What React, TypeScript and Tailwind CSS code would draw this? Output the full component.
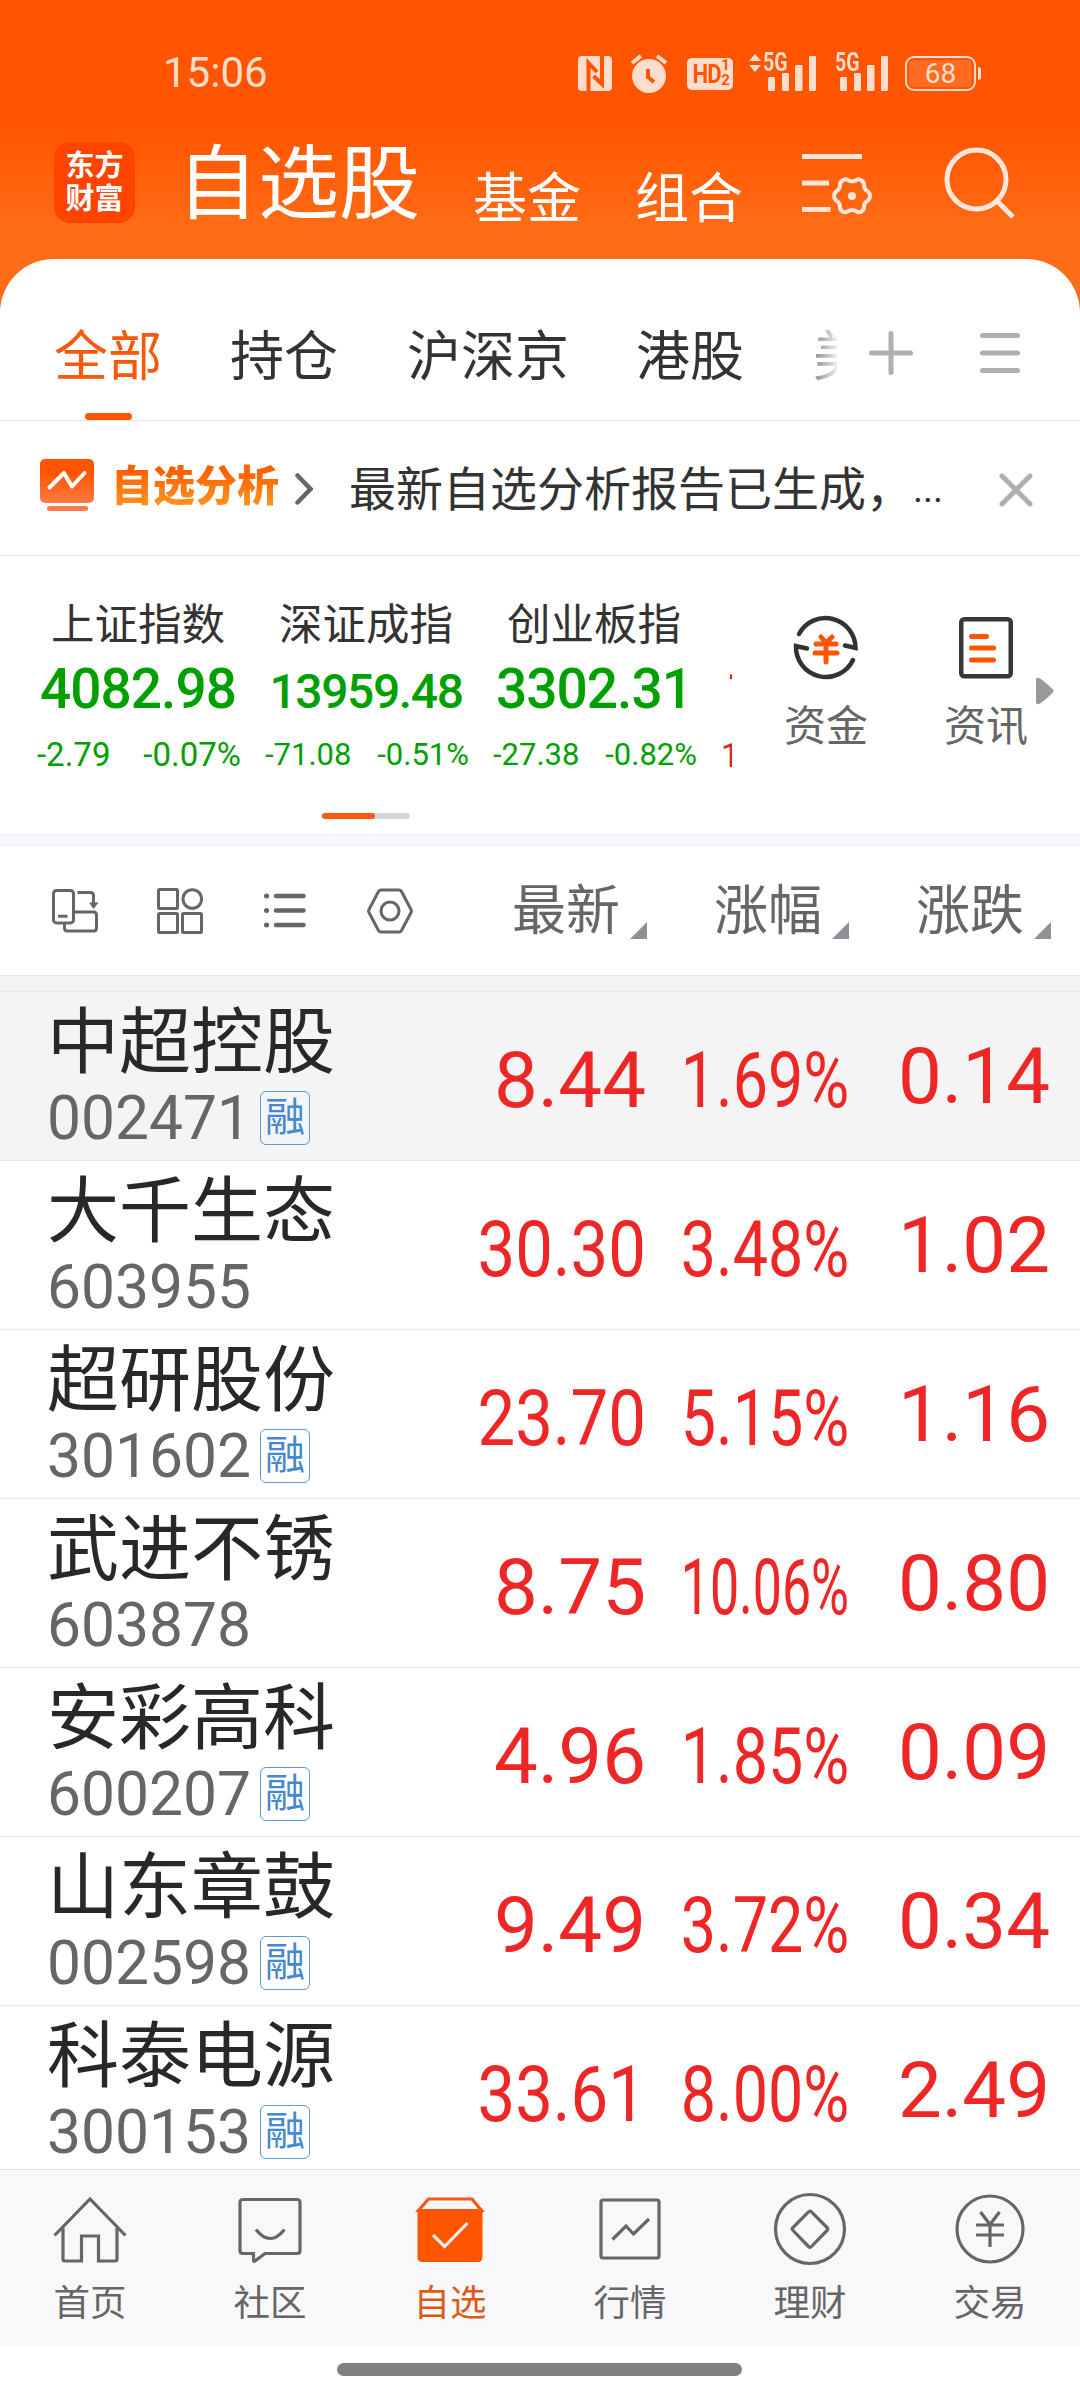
import type { ReactNode } from "react";
import clsx from "clsx";

const indices = [
  { name: "上证指数", value: "4082.98", change: "-2.79", percent: "-0.07%", valueClass: "text-[55px] leading-[72px] tracking-[-1px]", changeClass: "text-[33px]", percentClass: "text-[33px]" },
  { name: "深证成指", value: "13959.48", change: "-71.08", percent: "-0.51%", valueClass: "text-[48px] leading-[77px] tracking-[-1.4px]", changeClass: "text-[31px]", percentClass: "text-[31px]" },
  { name: "创业板指", value: "3302.31", change: "-27.38", percent: "-0.82%", valueClass: "text-[55px] leading-[72px] tracking-[-1px]", changeClass: "text-[31px]", percentClass: "text-[31px]" },
];

const stocks = [
  { name: "中超控股", code: "002471", margin: true, price: "8.44", percent: "1.69%", change: "0.14" },
  { name: "大千生态", code: "603955", margin: false, price: "30.30", percent: "3.48%", change: "1.02" },
  { name: "超研股份", code: "301602", margin: true, price: "23.70", percent: "5.15%", change: "1.16" },
  { name: "武进不锈", code: "603878", margin: false, price: "8.75", percent: "10.06%", change: "0.80" },
  { name: "安彩高科", code: "600207", margin: true, price: "4.96", percent: "1.85%", change: "0.09" },
  { name: "山东章鼓", code: "002598", margin: true, price: "9.49", percent: "3.72%", change: "0.34" },
  { name: "科泰电源", code: "300153", margin: true, price: "33.61", percent: "8.00%", change: "2.49" },
];

function Signal() {
  return (
    <svg width="49" height="36" viewBox="0 0 49 36" fill="currentColor">
      <rect x="0" y="22" width="7" height="14" rx="1" />
      <rect x="14" y="18" width="7" height="18" rx="1" />
      <rect x="27" y="10" width="7.5" height="26" rx="1" />
      <rect x="41" y="1" width="7" height="35" rx="1" />
    </svg>
  );
}

function StatusBar() {
  return (
    <div className="flex h-[146px] items-center pl-[163px] text-[#ffdccb]">
      <div className="w-[415px] text-[42px] leading-[48px]">15:06</div>
      <svg width="34" height="35" viewBox="0 0 34 35">
        <rect width="34" height="35" rx="4" fill="currentColor" />
        <path d="M10.500 35V7L19 16M24 0V28L15.500 20" fill="none" stroke="#ff5500" strokeWidth="4" />
      </svg>
      <svg className="ml-[18px]" width="38" height="39" viewBox="0 0 38 39" fill="none">
        <circle cx="19" cy="22" r="17" fill="currentColor" />
        <path d="M2 9l9-7M36 9l-9-7" stroke="currentColor" strokeWidth="4" />
        <path d="M18 15v8l6 5" stroke="#ff5500" strokeWidth="4" />
      </svg>
      <div className="ml-[19px] mt-0.5 flex h-8 w-[46px] justify-center rounded-[5px] bg-[#ffdccb] font-bold text-[#ff5500]">
        <span className="scale-x-[0.85] text-[26px] leading-[33px] tracking-[-1px]">HD</span>
        <span className="-ml-0.5 text-[15px] leading-[15px]">
          1<br />2
        </span>
      </div>
      <div className="relative ml-[35px]">
        <Signal />
        <svg className="absolute -left-[19px] -top-px" width="12" height="18" viewBox="0 0 12 18" fill="currentColor">
          <path d="M0 7L6 0l6 7zM0 11l6 7 6-7z" />
        </svg>
        <span className="absolute -left-[5px] -top-[4px] origin-left scale-x-[0.78] text-[25px] font-bold leading-6">5G</span>
      </div>
      <div className="relative ml-[23px]">
        <Signal />
        <span className="absolute -left-[5px] -top-[4px] origin-left scale-x-[0.78] text-[25px] font-bold leading-6">5G</span>
      </div>
      <div className="ml-[16px] flex h-[35px] w-[71px] items-center justify-center rounded-[9px] border-[2.500px] border-current p-[2px]">
        <div className="h-full w-full rounded-[5px] bg-[#ff6b20] text-center text-[28px] leading-[28px]">68</div>
      </div>
      <div className="ml-0.5 h-[13px] w-[3px] rounded-r bg-current" />
    </div>
  );
}

function Header() {
  return (
    <div className="h-[330px] bg-[linear-gradient(#ff5500_0px,#ff5500_125px,#ff6d18_235px,#ff6d18_330px)] text-white">
      <StatusBar />
      <div className="-mt-1 flex h-[82px] pl-[54px]">
        <div className="flex h-[81px] w-[81px] flex-col items-center justify-center rounded-[16px] bg-[#ff4400] text-[29px] font-bold leading-[33px]">
          <span>东方</span>
          <span>财富</span>
        </div>
        <h1 className="ml-[42px] text-[81px] leading-[85px]">自选股</h1>
        <span className="ml-[53px] mt-[27px] text-[54px] leading-[62px]">基金</span>
        <span className="ml-[54px] mt-[27px] text-[54px] leading-[62px]">组合</span>
        <svg className="ml-[58px] mt-[10px]" width="72" height="64" viewBox="0 0 72 64" fill="none" stroke="#ffe6d9" strokeWidth="5">
          <path d="M1 4.500h60M1 31h27M1 57.500h28.500" />
          <path
            d="M46.500 28q5 2.800 9 0q2-1.500 5 .5q3 2 2.500 5q0 4 4 6q2 2 2 4.500t-2 4.500q-4 2-4 6q.500 3-2.500 5q-3 1.500-5 0q-4-2.800-9 0q-2 1.500-5 0q-3-2-2.500-5q0-4-4-6q-2-2-2-4.500t2-4.500q4-2 4-6q-.500-3 2.500-5q3-2 5-.5z"
            strokeWidth="4"
          />
          <circle cx="51" cy="44" r="4" fill="#ffe6d9" stroke="none" />
        </svg>
        <svg className="ml-[71px] mt-[5px]" width="72" height="72" viewBox="0 0 72 72" fill="none" stroke="#ffe6d9" strokeWidth="5">
          <circle cx="32.500" cy="32.500" r="29.500" />
          <path d="M53 54l16 16" />
        </svg>
      </div>
    </div>
  );
}

function Tabs() {
  return (
    <div className="flex h-[162px] border-b border-[#e5e5e5] pl-[54px] text-[54px] leading-[72px] text-[#333]">
      <div className="flex flex-col items-center pt-[63px]">
        <span className="text-[#f4590c]">全部</span>
        <div className="mt-[19px] h-[7px] w-[47px] rounded-full bg-[#ff5500]" />
      </div>
      <span className="ml-[68px] pt-[63px]">持仓</span>
      <span className="ml-[69px] pt-[63px]">沪深京</span>
      <span className="ml-[67px] pt-[63px]">港股</span>
      <span className="ml-[69px] w-6 overflow-hidden bg-linear-to-r from-[#888] to-[#eee] bg-clip-text pt-[63px] text-transparent">美</span>
      <svg className="ml-[32px] mt-[72px]" width="44" height="44" viewBox="0 0 44 44" stroke="#b0b0b0" strokeWidth="5" strokeLinecap="round">
        <path d="M22 2.500v39M2.500 22h39" />
      </svg>
      <svg className="ml-[67px] mt-[73px]" width="40" height="42" viewBox="0 0 40 42" stroke="#b0b0b0" strokeWidth="5" strokeLinecap="round">
        <path d="M2.500 3.500h35M2.500 21h35M2.500 38.500h35" />
      </svg>
    </div>
  );
}

function AnalysisBanner() {
  return (
    <div className="flex h-[135px] items-center border-b border-[#e5e5e5] pl-10 pt-[3px]">
      <svg className="-mt-2" width="54" height="53" viewBox="0 0 54 53" fill="none">
        <defs>
          <linearGradient id="screen" x1="0" y1="0" x2="0" y2="1">
            <stop offset="0.3" stopColor="#ff5500" />
            <stop offset="1" stopColor="#ff7a42" />
          </linearGradient>
        </defs>
        <rect width="54" height="44" rx="5" fill="url(#screen)" />
        <path d="M9.500 28.500L24 14l8 13.500L44.500 14" stroke="white" strokeWidth="4" strokeLinecap="round" strokeLinejoin="round" />
        <rect x="7" y="47" width="41" height="5" rx="2.500" fill="#ff7a45" />
      </svg>
      <span className="-mt-[5px] ml-[17px] bg-linear-to-b from-[#ff6000] from-20% to-[#ff951e] to-90% bg-clip-text text-[42px] font-black leading-[52px] text-transparent">
        自选分析
      </span>
      <svg className="-mt-0.5 ml-[16px]" width="18" height="32" viewBox="0 0 18 32" fill="none" stroke="#666" strokeWidth="4.500" strokeLinecap="round">
        <path d="M2.500 2.500L15.500 16 2.500 29.500" />
      </svg>
      <span className="w-[565px] whitespace-nowrap pl-[36px] text-[47px] leading-[60px] text-[#333]">最新自选分析报告已生成，</span>
      <span className="ml-[35px] text-[38px] text-[#333]">...</span>
      <svg className="ml-[56px]" width="34" height="34" viewBox="0 0 34 34" stroke="#b0b0b0" strokeWidth="5" strokeLinecap="round">
        <path d="M3 3l28 28M31 3L3 31" />
      </svg>
    </div>
  );
}

function Shortcut({ label, children }: { label: string; children: ReactNode }) {
  return (
    <div className="flex w-[84px] flex-col items-center pt-[57px]">
      {children}
      <span className="mt-[19px] text-[42px] leading-[54px] text-[#666]">{label}</span>
    </div>
  );
}

function IndexPanel() {
  return (
    <div className="h-[291px] border-b-[14px] border-[#f5f7fa]">
      <div className="flex h-[257px]">
        <div className="ml-6 flex w-[708px] overflow-hidden text-[#00a000]">
          {indices.map((item) => (
            <div key={item.name} className="flex w-[228px] shrink-0 flex-col items-center pt-10">
              <span className="text-[43.500px] leading-[60px] text-[#333]">{item.name}</span>
              <div className="-mt-[3px] h-[68px] font-medium">
                <div className={item.valueClass}>{item.value}</div>
              </div>
              <div className="ml-0.5 flex w-[204px] items-baseline justify-between leading-[68px]">
                <span className={item.changeClass}>{item.change}</span>
                <span className={item.percentClass}>{item.percent}</span>
              </div>
            </div>
          ))}
          <div className="flex shrink-0 flex-col pl-[13px] pt-[98px] text-[#e02020]">
            <span className="pl-[5px] text-[48px] font-medium leading-[68px]">1</span>
            <span className="text-[33px] leading-[67px]">1</span>
          </div>
        </div>
        <div className="ml-[52px] flex gap-[76px]">
          <Shortcut label="资金">
            <svg width="68" height="68" viewBox="0 0 68 68" fill="none" stroke="#333" strokeWidth="4.500" strokeLinecap="round">
              <path d="M7 21A30 30 0 0 1 63.500 35L53 32.500" />
              <path d="M61 47A30 30 0 0 1 4 33L15 35.500" />
              <path d="M29 24l5 6 6-6M24 31h20M23 40h22M34 30v19" stroke="#ff5500" strokeWidth="5" />
            </svg>
          </Shortcut>
          <Shortcut label="资讯">
            <svg width="54" height="68" viewBox="0 0 54 68" fill="none" strokeLinecap="round">
              <rect x="2.250" y="6.250" width="49.500" height="57" rx="3" stroke="#383838" strokeWidth="4.500" />
              <path d="M12.500 23.500h15M12.500 35h22M12.500 47h22" stroke="#ff5500" strokeWidth="5" />
            </svg>
          </Shortcut>
        </div>
        <svg className="ml-2 mt-[121px]" width="18" height="28" viewBox="0 0 18 28" fill="#999">
          <path d="M0 3q0-3 3-2q3 1 14 11.500q1 1.500 0 3Q6 26 3 27q-3 1-3-2z" />
        </svg>
      </div>
      <div className="ml-[322px] h-[6px] w-[88px] rounded-full bg-[#d3d7db]">
        <div className="h-full w-[53px] rounded-full bg-[#fa5a0c]" />
      </div>
    </div>
  );
}

function SortHeader({ label }: { label: string }) {
  return (
    <div className="flex w-[202px] items-end justify-end">
      <span className="-mb-0.5 text-[54px] leading-[66px] text-[#666]">{label}</span>
      <svg className="mb-[4px] ml-[10px]" width="17" height="17" viewBox="0 0 17 17" fill="#8f8f96">
        <path d="M17 0v17H0z" />
      </svg>
    </div>
  );
}

function ListHeader() {
  return (
    <div className="flex h-[128px] items-center pl-[52px]">
      <svg width="46" height="46" viewBox="0 0 46 46" fill="none" stroke="#666" strokeWidth="3">
        <rect x="1.500" y="2.400" width="20" height="32.500" rx="3" />
        <path d="M6 28.200h9.500M25.500 4.500h13q3 0 3 3v8" />
        <path d="M21.500 24H41.500q3 0 3 3v13q0 3-3 3H15.500q-3 0-3-3v-5" />
        <path d="M37 14.500h9.500L41.500 21z" fill="#666" stroke="none" />
      </svg>
      <svg className="ml-[59px]" width="46" height="46" viewBox="0 0 46 46" fill="none" stroke="#666" strokeWidth="3">
        <rect x="1.500" y="1.500" width="19" height="19" rx="1" />
        <circle cx="35.300" cy="11" r="9.300" />
        <rect x="1.500" y="25.500" width="19" height="19" rx="1" />
        <rect x="25.500" y="25.500" width="19" height="19" rx="1" />
      </svg>
      <svg className="ml-[61px]" width="42" height="40" viewBox="0 0 42 40" stroke="#666" strokeWidth="4.500" strokeLinecap="round">
        <path d="M2.500 5h.1M2.500 19.500h.1M2.500 34h.1" strokeWidth="5" />
        <path d="M12 5h27.500M12 19.500h27.500M12 34h27.500" />
      </svg>
      <svg className="ml-[61px]" width="46" height="46" viewBox="0 0 46 46" fill="none" stroke="#666" strokeWidth="3" strokeLinejoin="round">
        <path d="M2 24.500q-.800-1.500 0-3L11.500 3.500q1-1.500 2.500-1.500h18q1.500 0 2.500 1.500L44 21.500q.800 1.500 0 3L34.500 42.500q-1 1.500-2.500 1.500H14q-1.500 0-2.500-1.500z" />
        <circle cx="23" cy="23" r="9" />
      </svg>
      <div className="ml-[32px] flex">
        <SortHeader label="最新" />
        <SortHeader label="涨幅" />
        <SortHeader label="涨跌" />
      </div>
    </div>
  );
}

function StockRow({ stock, active }: { stock: (typeof stocks)[number]; active: boolean }) {
  return (
    <div className={clsx("flex h-[169px] shrink-0 border-b border-[#eaeaea]", active && "bg-[#f4f4f4]")}>
      <div className="w-[395px] pl-[47px]">
        <div className="mt-[11px] text-[72px] leading-[80px] text-[#282828]">{stock.name}</div>
        <div className="mt-[3px] flex items-center text-[60.500px] leading-[66px] text-[#666]">
          <span className="w-[213px]">{stock.code}</span>
          {stock.margin && (
            <span className="-mt-[3px] flex h-[54px] w-[50px] items-center justify-center rounded-[6px] border-[1.500px] border-[#5c97d8] text-[40px] leading-[50px] text-[#4388d0]">
              融
            </span>
          )}
        </div>
      </div>
      <div className="flex pt-11 text-[78px] leading-[90px] text-[#ee2626]">
        <div className="flex w-[251px] justify-end">
          <span className={clsx("origin-right", stock.price.length > 4 && "scale-x-[0.86]")}>{stock.price}</span>
        </div>
        <div className="flex w-[203px] justify-end">
          <span className={clsx("origin-right", stock.percent.length > 5 ? "scale-x-[0.665]" : "scale-x-[0.805]")}>
            {stock.percent}
          </span>
        </div>
        <div className="-mt-1 flex w-[201px] justify-end">{stock.change}</div>
      </div>
    </div>
  );
}

function NavItem({ label, active, children }: { label: string; active?: boolean; children: ReactNode }) {
  return (
    <div className={clsx("flex w-[180px] flex-col items-center pt-[19px]", active ? "text-[#dd5b14]" : "text-[#666]")}>
      <svg width="80" height="80" viewBox="0 0 80 80" fill="none" stroke="currentColor" strokeWidth="3.200">
        {children}
      </svg>
      <span className="mt-[10px] text-[36.500px] leading-[50px]">{label}</span>
    </div>
  );
}

function BottomNav() {
  return (
    <div className="flex h-[177px] border-t border-[#dfe0e0] bg-[#f8f8fb]">
      <NavItem label="首页">
        <path d="M4.500 46.500L40 10l35.500 36.500M13 39v31q0 2 2 2h16.500V47h17v25H65q2 0 2-2V39" />
      </NavItem>
      <NavItem label="社区">
        <path d="M13 10.500h54q3 0 3 3v48q0 3-3 3H35L25 72q-1.500 1-1.500-1v-6.500H13q-3 0-3-3v-48q0-3 3-3z" />
        <path d="M26 40.500q14 18 28.500 0" />
      </NavItem>
      <NavItem label="自选" active>
        <path d="M8.500 21.500L18.500 10h43.500L71.500 21.500z" stroke="#f25a14" />
        <path d="M7.500 20.500h65V68q0 5-5 5h-55q-5 0-5-5z" fill="#ff5500" stroke="none" />
        <path d="M23 46l11.500 11.500L57.500 34" stroke="#fff0e8" />
      </NavItem>
      <NavItem label="行情">
        <rect x="11" y="11" width="58" height="58" rx="2" />
        <path d="M22.500 50.500L36 37l7.500 8L59 30" />
      </NavItem>
      <NavItem label="理财">
        <circle cx="40" cy="40" r="34.500" />
        <path d="M38.500 23q1.500-2 3 0L57 38.500q1.500 1.500 0 3L41.500 57.500q-1.500 1.500-3 0L23 41.500q-1.500-1.500 0-3z" />
      </NavItem>
      <NavItem label="交易">
        <circle cx="40" cy="40" r="33" />
        <path d="M30.500 23L40 35.500 49.500 23M40 35v23M26 36h28M26 46h28" />
      </NavItem>
    </div>
  );
}

export default function App() {
  return (
    <div className="flex h-[2400px] w-[1080px] flex-col overflow-hidden bg-white font-[Roboto,'Noto_Sans_CJK_SC',sans-serif]">
      <Header />
      <div className="relative -mt-[71px] rounded-t-[54px] bg-white">
        <Tabs />
        <AnalysisBanner />
        <IndexPanel />
        <ListHeader />
      </div>
      <div className="h-[17px] shrink-0 border-y border-[#eaeaea] bg-[#f4f4f4]" />
      <div className="flex h-[1177px] flex-col overflow-hidden">
        {stocks.map((stock, i) => (
          <StockRow key={stock.code} stock={stock} active={i === 0} />
        ))}
      </div>
      <BottomNav />
      <div className="ml-[337px] mt-[17px] h-[13px] w-[405px] rounded-full bg-[#808080]" />
    </div>
  );
}
